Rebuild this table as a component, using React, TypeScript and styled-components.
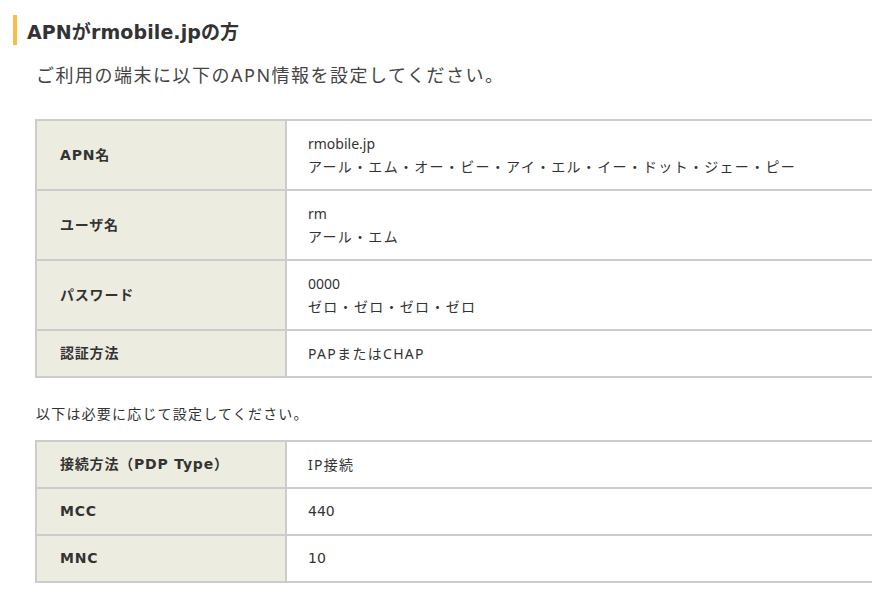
import React from "react";
import styled, { createGlobalStyle } from "styled-components";

const Global = createGlobalStyle`
  html, body { margin: 0; padding: 0; background: #fff; overflow: hidden; }
  body {
    font-family: "Noto Sans", "Noto Sans CJK JP", sans-serif;
    color: #333;
  }
`;

const Page = styled.div`
  width: 940px;
  padding: 15px 0 0 13px;
  box-sizing: border-box;
`;

const Heading = styled.h2`
  margin: 0;
  padding: 0 0 0 10px;
  border-left: 4px solid #fbbd48;
  height: 30px;
  display: flex;
  align-items: center;
  font-family: "DejaVu Sans", "Noto Sans CJK JP", sans-serif;
  font-size: 19px;
  font-weight: bold;
  color: #333;
  letter-spacing: 0.1px;
`;

const Body = styled.div`
  padding: 0 0 0 22px;
`;

const Lead = styled.p`
  margin: 17px 0 0 1px;
  font-size: 18px;
  line-height: 26px;
  color: #444;
  letter-spacing: 1.5px;
`;

const Note = styled.p`
  margin: 26px 0 16px 1px;
  font-size: 14px;
  line-height: 20px;
  color: #333;
  letter-spacing: 1.2px;
`;

const Table = styled.table<{ $top: number }>`
  margin-top: ${(p) => p.$top}px;
  width: 880px;
  border-collapse: collapse;
  border: 2px solid #ccc;
  font-size: 14px;
`;

const Label = styled.th`
  width: 203px;
  text-align: left;
  background: #edece1;
  border: 2px solid #ccc;
  padding: 11px 22px 11px 23px;
  line-height: 23px;
  font-family: "DejaVu Sans", "Noto Sans CJK JP", sans-serif;
  font-weight: bold;
  font-size: 14px;
  color: #333;
  letter-spacing: 0.8px;
`;

const Value = styled.td<{ $num?: boolean }>`
  border: 2px solid #ccc;
  padding: 11px 21px;
  line-height: 23px;
  color: #333;
  font-family: ${(p) =>
    p.$num
      ? `"DejaVu Sans", "Noto Sans CJK JP", sans-serif`
      : `"Noto Sans", "Noto Sans CJK JP", sans-serif`};
  font-size: 14px;
`;

const Line = styled.span<{ $ja: boolean }>`
  letter-spacing: ${(p) => (p.$ja ? "1.3px" : "0")};
`;

type Row = { label: string; lines: string[]; num?: boolean };

const main: Row[] = [
  { label: "APN名", lines: ["rmobile.jp", "アール・エム・オー・ビー・アイ・エル・イー・ドット・ジェー・ピー"] },
  { label: "ユーザ名", lines: ["rm", "アール・エム"] },
  { label: "パスワード", lines: ["0000", "ゼロ・ゼロ・ゼロ・ゼロ"] },
  { label: "認証方法", lines: ["PAPまたはCHAP"] },
];

const extra: Row[] = [
  { label: "接続方法（PDP Type）", lines: ["IP接続"] },
  { label: "MCC", lines: ["440"], num: true },
  { label: "MNC", lines: ["10"], num: true },
];

const isJa = (s: string) => /[^\x00-\x7f]/.test(s);

const Rows = ({ rows }: { rows: Row[] }) => (
  <tbody>
    {rows.map((r) => (
      <tr key={r.label}>
        <Label>{r.label}</Label>
        <Value $num={r.num}>
          {r.lines.map((l, i) => (
            <React.Fragment key={i}>
              {i > 0 && <br />}
              <Line $ja={isJa(l)}>{l}</Line>
            </React.Fragment>
          ))}
        </Value>
      </tr>
    ))}
  </tbody>
);

export default function App() {
  return (
    <>
      <Global />
      <Page>
        <Heading>APNがrmobile.jpの方</Heading>
        <Body>
          <Lead>ご利用の端末に以下のAPN情報を設定してください。</Lead>
          <Table $top={31}>
            <Rows rows={main} />
          </Table>
          <Note>以下は必要に応じて設定してください。</Note>
          <Table $top={0}>
            <Rows rows={extra} />
          </Table>
        </Body>
      </Page>
    </>
  );
}
